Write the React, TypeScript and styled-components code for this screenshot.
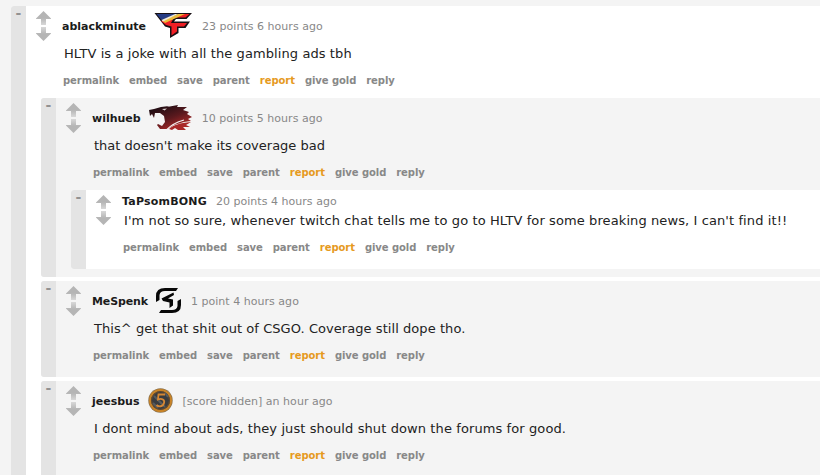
import { ReactNode } from 'react';
import styled, { createGlobalStyle } from 'styled-components';

type CommentData = {
  author: string;
  flair?: ReactNode;
  score: string;
  text: string;
  tracking?: number;
  authorTracking?: number;
  replies?: CommentData[];
};

const GlobalStyle = createGlobalStyle`
  body {
    margin: 0;
    background: #f4f4f4;
    overflow: hidden;
    font-family: 'DejaVu Sans', Verdana, sans-serif;
  }
`;

const Page = styled.div`
  height: 475px;
  box-sizing: border-box;
  padding: 6px 0 0 11px;
  overflow: hidden;
`;

const Thread = styled.div<{ $odd: boolean }>`
  display: flex;
  margin-bottom: 4px;
  border-radius: 3px 0 0 3px;
  overflow: hidden;
  background: ${({ $odd }) => ($odd ? '#f4f4f4' : '#fff')};
`;

const Collapse = styled.div`
  flex: 0 0 15px;
  box-sizing: border-box;
  padding-top: 1px;
  background: #e4e4e4;
  color: #929292;
  font-size: 14px;
  font-weight: 700;
  line-height: 12px;
  text-align: center;
`;

const Content = styled.div`
  flex: 1;
  min-width: 0;
  padding-bottom: 4px;
`;

const Entry = styled.div<{ $hasFlair: boolean }>`
  display: flex;
  height: ${({ $hasFlair }) => ($hasFlair ? 92 : 75)}px;
`;

const Votes = styled.div`
  display: flex;
  flex-direction: column;
  gap: 2px;
  width: 15px;
  padding: 5px 11px 0 10px;

  svg {
    display: block;
  }
`;

const Body = styled.div`
  white-space: nowrap;
`;

const Tagline = styled.div<{ $hasFlair: boolean }>`
  display: flex;
  align-items: center;
  height: ${({ $hasFlair }) => ($hasFlair ? 25 : 14)}px;
  padding-top: ${({ $hasFlair }) => ($hasFlair ? 7 : 4)}px;
  color: #888;
  font-size: 11px;

  > span:first-child,
  > span:last-child {
    padding-top: ${({ $hasFlair }) => ($hasFlair ? 2 : 0)}px;
  }
`;

const Author = styled.span<{ $tracking: number }>`
  color: #1b1b1b;
  font-weight: 700;
  letter-spacing: ${({ $tracking }) => $tracking}px;
`;

const Flair = styled.span`
  display: flex;
  margin: 0 1px 0 8px;
`;

const Score = styled.span`
  margin-left: 9px;
  letter-spacing: 0.03px;
`;

const Text = styled.div<{ $hasFlair: boolean; $tracking: number }>`
  margin-top: ${({ $hasFlair }) => ($hasFlair ? 6 : 3)}px;
  padding-left: 2px;
  color: #222;
  font-size: 13px;
  letter-spacing: ${({ $tracking }) => $tracking}px;
  line-height: 20px;
`;

const Actions = styled.div`
  display: flex;
  gap: 10px;
  margin-top: 10px;
  padding-left: 1px;
  font-size: 10px;
  font-weight: 700;
  letter-spacing: -0.07px;
  line-height: 14px;
`;

const Action = styled.a<{ $highlighted: boolean }>`
  color: ${({ $highlighted }) => ($highlighted ? '#e69a1e' : '#888')};
`;

const Replies = styled.div`
  padding-left: 15px;
`;

const Arrow = ({ down = false }: { down?: boolean }) => (
  <svg width="15" height="14" viewBox="0 0 15 14">
    <defs>
      <linearGradient id="stem" x1="0" y1="0" x2="0" y2="1">
        <stop offset="0.5" stopColor="#b5b5b5" />
        <stop offset="1" stopColor="#d8d8d8" />
      </linearGradient>
    </defs>
    <path
      d="M7.5 0L15 7.5V8H10V14H5V8H0V7.5Z"
      fill="url(#stem)"
      transform={down ? 'rotate(180 7.5 7)' : undefined}
    />
  </svg>
);

const FazeLogo = () => (
  <svg width="38" height="25" viewBox="0 0 38 25">
    <path d="M0.5 0H38L32.5 6H22L20 8.500H36L31.500 15H24.500V20L16 25V15L11 13.500Z" fill="#171014" />
    <path d="M7 8L30 1H35.500L31.500 4.500H20L17 10H33L30 13.500H23V18.500L17.500 22.500V13.500L12 12Z" fill="#f01f25" />
    <path d="M2.500 1H22L7.500 7Z" fill="#263c83" />
    <path d="M8 7.500L24 1H31L11 10Z" fill="#edbd39" />
    <path d="M7.500 7L21 1H24L9 8.500Z" fill="#eee9dc" />
  </svg>
);

const PantherLogo = () => (
  <svg width="43" height="25" viewBox="0 0 43 25">
    <defs>
      <linearGradient id="panther" x1="0" y1="0" x2="0.7" y2="1">
        <stop offset="0.2" stopColor="#250e14" />
        <stop offset="0.6" stopColor="#5c191e" />
        <stop offset="1" stopColor="#b52b29" />
      </linearGradient>
    </defs>
    <path
      d="M0 5L5 4L12 2L20 1L18 2L29 0L28 2L38 2L34 5L40 7L38 9L43 12L39 14L42 16L35 17L25 20L19 24H11L8 20L9 19L13 21L16 17L15 11L11 8L6 8L5 13L3 9L1 11Z"
      fill="url(#panther)"
    />
    <path d="M20 24C25 20 30 18 42 17L37 20L41 22L34 22L37 25H29L26 23L23 25Z" fill="#a92727" />
    <path d="M13 4L18 3.500L15.500 5.500Z" fill="#ded5d4" />
    <path d="M18 24.500C23 19 28 17 35 15" fill="none" stroke="#f4eeee" strokeWidth="1.3" />
  </svg>
);

const SkLogo = () => (
  <svg width="25" height="25" viewBox="0 0 25 25" fill="#080808">
    <path d="M22 0L20 3H9Q4 3 3.500 7V12L0 14V8Q0 0 9 0Z" />
    <path d="M3 25L5 22H16Q21 22 21.500 18V13L25 11V17Q25 25 16 25Z" />
    <path d="M17.500 4.500L5.500 10.500L7 13L13.500 14.500V20L17 17.500V11.500L12 10.500L18 7Z" />
  </svg>
);

const CoinLogo = () => (
  <svg width="25" height="25" viewBox="0 0 25 25">
    <circle cx="12.5" cy="12.5" r="12.2" fill="#8b7350" />
    <circle cx="12.5" cy="12.5" r="10.5" fill="#393c40" stroke="#c88327" strokeWidth="2" />
    <circle cx="12.5" cy="12.5" r="8.9" fill="none" stroke="#694b2c" />
    <path d="M6 8L17 19M5 15L10 20M17 5L20 9" stroke="#565b5e" strokeWidth="2" />
    <path
      d="M17 6.500H10.500L10 11.500C14 10 17 12 16 15C15 19 10.500 19 8.500 17"
      fill="none"
      stroke="#d58734"
      strokeWidth="1.8"
    />
  </svg>
);

const actions = ['permalink', 'embed', 'save', 'parent', 'report', 'give gold', 'reply'];

const thread: CommentData = {
  author: 'ablackminute',
  flair: <FazeLogo />,
  score: '23 points 6 hours ago',
  text: 'HLTV is a joke with all the gambling ads tbh',
  tracking: 0.09,
  replies: [
    {
      author: 'wilhueb',
      flair: <PantherLogo />,
      score: '10 points 5 hours ago',
      text: "that doesn't make its coverage bad",
      replies: [
        {
          author: 'TaPsomBONG',
          authorTracking: 0.2,
          score: '20 points 4 hours ago',
          text: "I'm not so sure, whenever twitch chat tells me to go to HLTV for some breaking news, I can't find it!!",
          tracking: 0.1,
        },
      ],
    },
    {
      author: 'MeSpenk',
      authorTracking: -0.13,
      flair: <SkLogo />,
      score: '1 point 4 hours ago',
      text: 'This^ get that shit out of CSGO. Coverage still dope tho.',
      tracking: 0.06,
    },
    {
      author: 'jeesbus',
      flair: <CoinLogo />,
      score: '[score hidden] an hour ago',
      text: 'I dont mind about ads, they just should shut down the forums for good.',
      tracking: 0.1,
    },
  ],
};

const Comment = ({ data, depth = 0 }: { data: CommentData; depth?: number }) => {
  const hasFlair = Boolean(data.flair);

  return (
    <Thread $odd={depth % 2 === 1}>
      <Collapse>-</Collapse>
      <Content>
        <Entry $hasFlair={hasFlair}>
          <Votes>
            <Arrow />
            <Arrow down />
          </Votes>
          <Body>
            <Tagline $hasFlair={hasFlair}>
              <Author $tracking={data.authorTracking ?? 0}>{data.author}</Author>
              {data.flair && <Flair>{data.flair}</Flair>}
              <Score>{data.score}</Score>
            </Tagline>
            <Text $hasFlair={hasFlair} $tracking={data.tracking ?? 0}>
              {data.text}
            </Text>
            <Actions>
              {actions.map((action) => (
                <Action key={action} $highlighted={action === 'report'}>
                  {action}
                </Action>
              ))}
            </Actions>
          </Body>
        </Entry>
        {data.replies && (
          <Replies>
            {data.replies.map((reply) => (
              <Comment key={reply.author} data={reply} depth={depth + 1} />
            ))}
          </Replies>
        )}
      </Content>
    </Thread>
  );
};

export default () => (
  <>
    <GlobalStyle />
    <Page>
      <Comment data={thread} />
    </Page>
  </>
);
